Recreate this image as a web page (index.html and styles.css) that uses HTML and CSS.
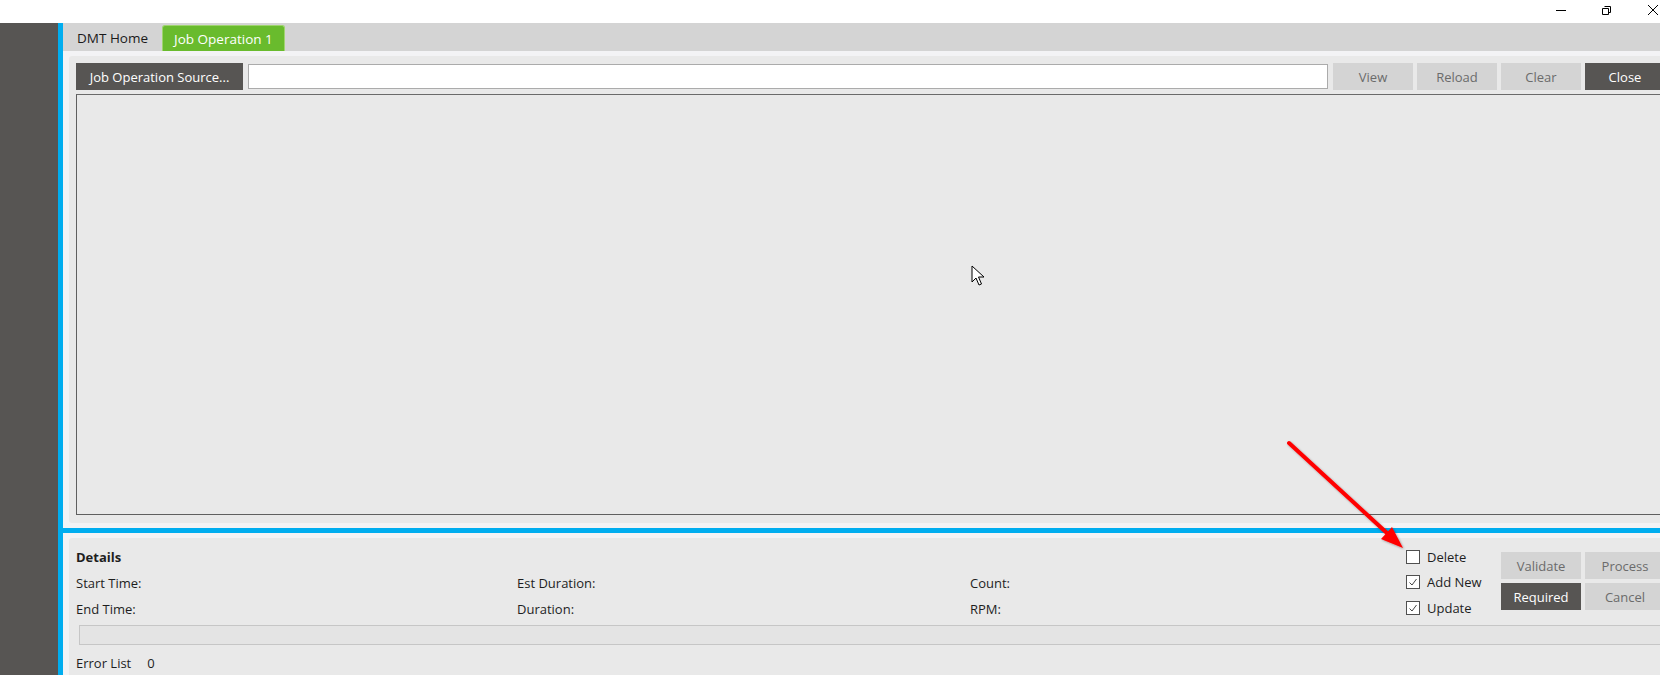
FILE: index.html
```html
<!DOCTYPE html>
<html lang="en">
<head>
    <meta charset="UTF-8">
    <meta name="viewport" content="width=device-width, initial-scale=1.0">
    <title>DMT - Job Operation</title>
    <link rel="stylesheet" href="styles.css">
</head>
<body>
    <header class="titlebar">
        <div class="win-controls">
            <svg class="win-btn" width="12" height="12" viewBox="0 0 12 12"><path d="M1 6.5h10" stroke="#000" stroke-width="1"/></svg>
            <svg class="win-btn" width="12" height="12" viewBox="0 0 12 12"><path d="M3.5 2.5h6v6h-2M1.5 4.5h6v6h-6z" stroke="#000" stroke-width="1" fill="none"/></svg>
            <svg class="win-btn" width="12" height="12" viewBox="0 0 12 12"><path d="M1 1l10 10M11 1L1 11" stroke="#000" stroke-width="1"/></svg>
        </div>
    </header>

    <div class="app">
        <aside class="sidebar"></aside>
        <div class="main">
            <nav class="tabs">
                <span class="tab">DMT Home</span>
                <span class="tab active">Job Operation 1</span>
            </nav>

            <div class="workspace">
                <section class="panel source-panel">
                    <div class="toolbar">
                        <button class="btn dark source-btn">Job Operation Source...</button>
                        <input class="source-input" type="text">
                        <button class="btn">View</button>
                        <button class="btn">Reload</button>
                        <button class="btn">Clear</button>
                        <button class="btn dark">Close</button>
                    </div>
                    <div class="viewer"></div>
                </section>

                <div class="splitter"></div>

                <section class="panel details-panel">
                    <div class="details-top">
                        <div class="details-grid">
                            <span class="details-title">Details</span>
                            <span></span>
                            <span></span>
                            <span>Start Time:</span>
                            <span>Est Duration:</span>
                            <span>Count:</span>
                            <span>End Time:</span>
                            <span>Duration:</span>
                            <span>RPM:</span>
                        </div>
                        <div class="options">
                            <label class="check"><span class="box"></span>Delete</label>
                            <label class="check"><span class="box"><svg width="12" height="12" viewBox="0 0 12 12"><path d="M2.5 6.5l2.5 2.5 4.5-6" stroke="#444" stroke-width="1" fill="none"/></svg></span>Add New</label>
                            <label class="check"><span class="box"><svg width="12" height="12" viewBox="0 0 12 12"><path d="M2.5 6.5l2.5 2.5 4.5-6" stroke="#444" stroke-width="1" fill="none"/></svg></span>Update</label>
                        </div>
                        <div class="actions">
                            <button class="btn">Validate</button>
                            <button class="btn">Process</button>
                            <button class="btn dark">Required</button>
                            <button class="btn">Cancel</button>
                        </div>
                    </div>
                    <div class="progress"></div>
                    <div class="errors">Error List <span class="error-count">0</span></div>
                </section>
            </div>
        </div>
    </div>

    <!-- mouse pointer over the viewer -->
    <svg class="cursor" width="14" height="22" viewBox="0 0 14 22">
        <path d="M1 1v16l4-4 3 7 2.5-1-3-7h5.5z" fill="#fff" stroke="#000" stroke-width="1" stroke-linejoin="miter"/>
    </svg>

    <!-- red annotation arrow pointing at Delete -->
    <svg class="annotation" width="1660" height="675" viewBox="0 0 1660 675">
        <defs>
            <filter id="shadow" x="-10%" y="-10%" width="130%" height="130%">
                <feDropShadow dx="1" dy="1" stdDeviation="1" flood-color="#000" flood-opacity="0.35"/>
            </filter>
        </defs>
        <g filter="url(#shadow)">
            <line x1="1289" y1="443" x2="1388" y2="534" stroke="#ff0000" stroke-width="4" stroke-linecap="round"/>
            <polygon points="1403,548 1381,539 1392,527" fill="#ff0000"/>
        </g>
    </svg>
</body>
</html>
```

FILE: styles.css
```css
:root {
    --sidebar: #575553;
    --accent: #00adef;
    --strip: #d4d4d4;
    --workspace: #f3f3f5;
    --panel: #e9e9e9;
    --btn: #d4d4d4;
    --btn-text: #6b6b6b;
    --green: #69bb2d;
    --text: #1e1e1e;
}

* {
    box-sizing: border-box;
}

body {
    margin: 0;
    width: 1660px;
    height: 675px;
    overflow: hidden;
    font-family: "Open Sans", "Liberation Sans", sans-serif;
    font-size: 13px;
    color: var(--text);
    background: #fff;
    position: relative;
}

.titlebar {
    height: 23px;
    background: #fff;
    display: flex;
    justify-content: flex-end;
}

.win-controls {
    display: flex;
    align-items: flex-start;
    gap: 34px;
    padding: 4px 1px 0 0;
}

.win-btn {
    display: block;
}

.app {
    display: flex;
    width: 1678px;
    height: 652px;
}

.sidebar {
    width: 58px;
    background: var(--sidebar);
}

.main {
    flex: 1;
    display: flex;
    flex-direction: column;
    border-left: 5px solid var(--accent);
}

.tabs {
    height: 28px;
    background: var(--strip);
    display: flex;
    align-items: flex-end;
    gap: 2px;
    padding-left: 2px;
}

.tab {
    height: 26px;
    padding: 0 12px;
    display: flex;
    align-items: center;
    font-size: 13.5px;
    color: #1a1a1a;
}

.tab.active {
    background: var(--green);
    color: #fff;
    border: 1px solid #9fd46e;
    border-bottom: none;
    border-radius: 3px 3px 0 0;
    padding: 0 11px;
}

.workspace {
    flex: 1;
    background: var(--workspace);
    display: flex;
    flex-direction: column;
    padding: 5px 6px 0 6px;
}

.panel {
    background: var(--panel);
    border-radius: 3px;
}

.source-panel {
    padding: 7px 7px 8px 7px;
}

.toolbar {
    display: flex;
    align-items: center;
    gap: 4px;
    height: 27px;
}

.btn {
    height: 27px;
    width: 80px;
    border: none;
    border-radius: 0;
    background: var(--btn);
    color: var(--btn-text);
    font-family: inherit;
    font-size: 13px;
    padding: 0;
}

.btn.dark {
    background: var(--sidebar);
    color: #fff;
}

.source-btn {
    width: 167px;
}

.source-input {
    flex: 1;
    height: 25px;
    margin: 0 1px;
    border: 1px solid #ababab;
    background: #fff;
}

.viewer {
    margin-top: 4px;
    height: 421px;
    border: 1px solid #5f5f5f;
    border-top-color: #6a6a6a;
    background: var(--panel);
}

.splitter {
    height: 5px;
    margin: 5px -6px;
    background: var(--accent);
}

.details-panel {
    flex: 1;
    padding: 6px 7px 0 7px;
    border-radius: 3px 3px 0 0;
}

.details-top {
    display: flex;
}

.details-grid {
    flex: 1;
    display: grid;
    grid-template-columns: 441px 453px 1fr;
    grid-auto-rows: 26px;
    align-items: center;
}

.details-title {
    font-weight: bold;
}

.options {
    width: 95px;
    display: flex;
    flex-direction: column;
}

.check {
    height: 25.5px;
    display: flex;
    align-items: center;
    gap: 7px;
}

.box {
    width: 14px;
    height: 14px;
    border: 1px solid #505050;
    background: #fff;
    display: flex;
    align-items: center;
    justify-content: center;
}

.box svg {
    display: block;
}

.actions {
    display: grid;
    grid-template-columns: 80px 80px;
    grid-auto-rows: 27px;
    gap: 4px;
    margin-top: 8px;
    align-self: flex-start;
}

.progress {
    margin: 3px 0 0 3px;
    height: 20px;
    border: 1px solid #c6c6c6;
    background: #e4e4e4;
}

.errors {
    height: 25px;
    margin-top: 5px;
    display: flex;
    align-items: center;
}

.error-count {
    margin-left: 16px;
}

.cursor {
    position: absolute;
    left: 971px;
    top: 265px;
}

.annotation {
    position: absolute;
    left: 0;
    top: 0;
    pointer-events: none;
}
```
